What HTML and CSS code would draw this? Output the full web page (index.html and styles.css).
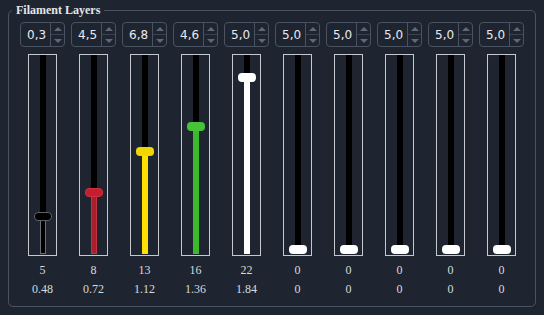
FILE: index.html
```html
<!DOCTYPE html>
<html lang=en><head>
<meta charset=UTF-8>
<title>Filament Layers</title><link rel="stylesheet" href="styles.css"></head><body>
<fieldset class=layers>
<legend>Filament Layers</legend>
<div class=cols id=cols></div>
</fieldset>
<script>
const data=[
['0,3',5,'0.48','black'],['4,5',8,'0.72','red'],['6,8',13,'1.12','yellow'],['4,6',16,'1.36','green'],['5,0',22,'1.84','white'],
['5,0',0,'0','white'],['5,0',0,'0','white'],['5,0',0,'0','white'],['5,0',0,'0','white'],['5,0',0,'0','white']];
const box=document.getElementById('cols');
data.forEach(([spin,layer,mm,c])=>{
const h=layer?Math.round((layer-1)*8.17):0;
box.insertAdjacentHTML('beforeend',
`<div class=col>
<div class=spin><span>${spin}</span><div class=arrows><i class=up></i><i class=dn></i></div></div>
<div class=track><div class=groove></div><div class="knob ${c}"></div><div class="fill ${c}" style="height:${h}px"></div></div>
<div class=num>${layer}</div><div class=val>${mm}</div>
</div>`)});
</script>
</body></html>
```
FILE: styles.css
```css
body{margin:0;background:#1e2530}
.layers{margin:3px 8px 0;padding:5px 10px 0 11px;border:1px solid #4a5361;border-radius:5px;height:304px;box-sizing:border-box;min-width:0}
legend{font:bold 12px/14px "Liberation Serif",serif;color:#e4e6ea;padding:0 4px;margin-left:-8px}
.cols{display:grid;grid-template-columns:repeat(10,45px);column-gap:6px}
.col{display:flex;flex-direction:column;align-items:center}
.spin{display:flex;width:45px;height:25px;box-sizing:border-box;border:1px solid #4a5361;border-radius:4px}
.spin span{flex:1;display:flex;align-items:center;padding-left:6px;font:12px "DejaVu Sans",sans-serif;color:#e8eaee}
.arrows{width:13px;border-left:1px solid #4a5361;display:flex;flex-direction:column}
.arrows i{flex:1;display:flex;align-items:center;justify-content:center}
.dn{border-top:1px solid #3a424e}
.up::before{content:"";border-left:4px solid transparent;border-right:4px solid transparent;border-bottom:4px solid #5f6874}
.dn::before{content:"";border-left:4px solid transparent;border-right:4px solid transparent;border-top:4px solid #5f6874}
.track{margin-top:7px;width:29px;height:202px;box-sizing:border-box;border:1px solid #c5c9ce;display:flex;flex-direction:column;align-items:center;padding-bottom:1px}
.groove{flex:1;width:6px;background:#000}
.knob{flex:none;width:18px;height:9px;border-radius:4px;box-sizing:border-box;border:1px solid transparent}
.fill{flex:none;width:6px;box-sizing:border-box}
.knob.black{background:#000;border-color:#5c6168}.fill.black{background:#000;border:1px solid #6a6f76;border-top:0}
.knob.red{background:#c41f2e;border-color:#d2303e}.fill.red{background:#ab1f2b;border:1px solid #c23442;border-top:0}
.knob.yellow{background:#f2d600}.fill.yellow{background:#ffe000}
.knob.green{background:#48c23a}.fill.green{background:#3cba2c}
.knob.white,.fill.white{background:#fff}
.num,.val{font:12px/14px "Liberation Serif",serif;color:#d6dade}
.num{margin-top:7px}.val{margin-top:5px}
```
